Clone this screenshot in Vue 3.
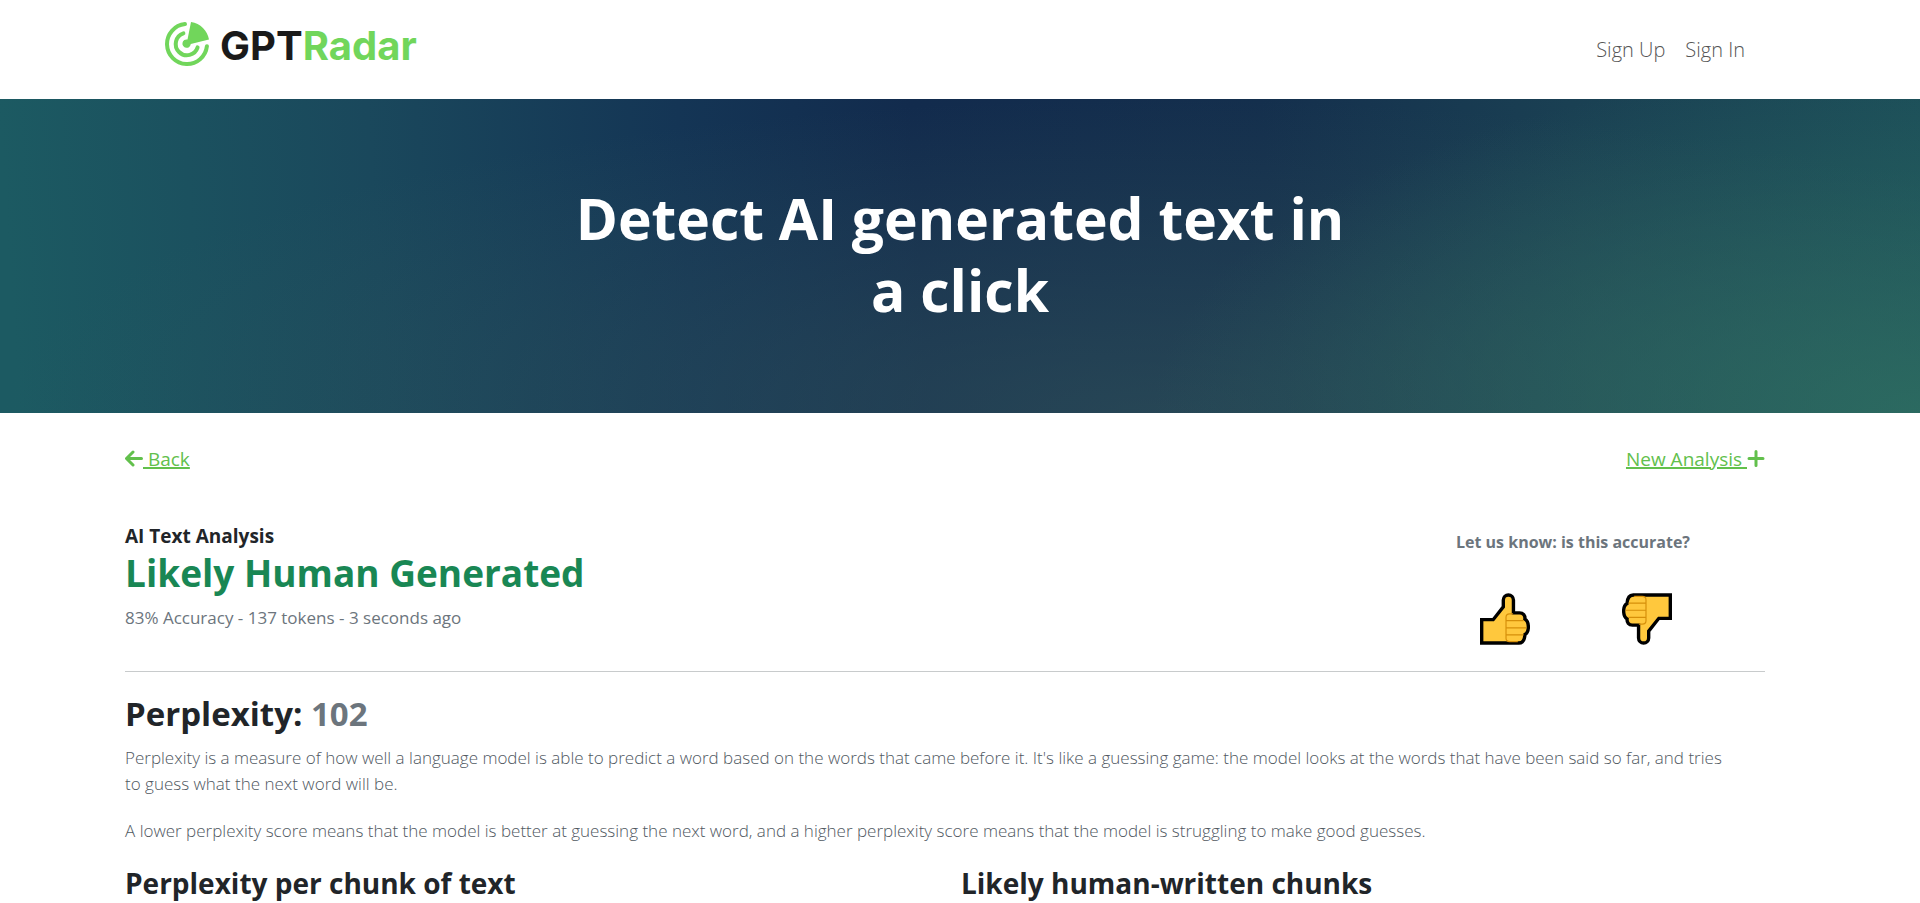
<template>
  <div class="page">
    <header class="navbar">
      <a href="#" class="brand" aria-label="GPTRadar">
        <svg class="brand-icon" viewBox="0 0 44 44" aria-hidden="true">
          <g fill="none" stroke="currentColor" stroke-width="4" stroke-linecap="round">
            <path d="M20 2.1A20 20 0 1 0 41.9 24.2" />
            <path d="M18.4 11.4A11.2 11.2 0 1 0 32.6 25.4" />
          </g>
          <path d="M26 0C35.500 1.500 42.500 8.500 44 17.400L25.800 22A4.200 4.200 0 1 1 22.500 17.500Z" fill="currentColor" />
        </svg>
        <span class="brand-name">GPT<span class="brand-accent">Radar</span></span>
      </a>
      <nav class="nav-links">
        <a v-for="link in links" :key="link" href="#">{{ link }}</a>
      </nav>
    </header>

    <section class="hero">
      <h1>Detect AI generated text in a click</h1>
    </section>

    <main class="content">
      <div class="actions">
        <a href="#" class="action">
          <svg class="action-icon" viewBox="0 0 18 18" aria-hidden="true">
            <path d="M8 2L1.500 8.500L8 15M2 8.500H16.500" />
          </svg><span>&nbsp;Back</span>
        </a>
        <a href="#" class="action">
          <span>New Analysis&nbsp;</span><svg class="action-icon" viewBox="0 0 18 18" aria-hidden="true">
            <path d="M9 1.500V15.500M2 8.500H16" />
          </svg>
        </a>
      </div>

      <section class="summary">
        <div>
          <h2 class="eyebrow">AI Text Analysis</h2>
          <p class="verdict">{{ result.verdict }}</p>
          <p class="meta">{{ result.accuracy }}% Accuracy - {{ result.tokens }} tokens - {{ result.age }}</p>
        </div>
        <div class="feedback">
          <p class="feedback-title">Let us know: is this accurate?</p>
          <div class="votes">
            <button
              v-for="vote in votes"
              :key="vote.name"
              type="button"
              class="vote"
              :class="{ down: vote.down }"
              :aria-label="vote.name"
            >
              <svg viewBox="0 0 148 152" aria-hidden="true">
                <path
                  d="M5 78H39L69 40V20A15 15 0 0 1 99 20V58H117C128 58 134 66 133 76C146 84 147 114 133 122C132 138 126 147 115 147H5Z"
                  fill="#ffc83d"
                  stroke="#000"
                  stroke-width="10"
                />
                <path
                  d="M98 61H88Q77 61 77 71V133Q77 143 88 143H112M77 81H129M77 102H137M77 123H129"
                  fill="none"
                  stroke="#d68f0a"
                  stroke-width="3.500"
                />
              </svg>
            </button>
          </div>
        </div>
      </section>

      <section class="perplexity">
        <h2>Perplexity: <span class="score">{{ result.perplexity }}</span></h2>
        <p>
          Perplexity is a measure of how well a language model is able to predict a word based on the words that came
          before it. It's like a guessing game: the model looks at the words that have been said so far, and tries
          to guess what the next word will be.
        </p>
        <p>
          A lower perplexity score means that the model is better at guessing the next word, and a higher perplexity
          score means that the model is struggling to make good guesses.
        </p>
      </section>

      <div class="columns">
        <h3>Perplexity per chunk of text</h3>
        <h3>Likely human-written chunks</h3>
      </div>
    </main>
  </div>
</template>

<script setup>
const links = ['Sign Up', 'Sign In']

const result = {
  verdict: 'Likely Human Generated',
  accuracy: 83,
  tokens: 137,
  age: '3 seconds ago',
  perplexity: 102
}

const votes = [
  { name: 'Accurate', down: false },
  { name: 'Not accurate', down: true }
]
</script>

<style>
body {
  margin: 0;
  background: #fff;
}
</style>

<style scoped>
.page {
  font-family: 'Open Sans', 'Noto Sans', sans-serif;
  color: #212529;
}

h1,
h2,
h3,
p {
  margin: 0;
}

.navbar {
  display: flex;
  justify-content: space-between;
  align-items: center;
  height: 99px;
  box-sizing: border-box;
  padding: 0 175px 0 165px;
}

.brand {
  display: flex;
  align-items: flex-start;
  gap: 11px;
  padding-bottom: 8px;
  color: #71d65b;
  text-decoration: none;
}

.brand-icon {
  width: 44px;
  height: 44px;
}

.brand-name {
  font-family: Inter, sans-serif;
  font-size: 40px;
  line-height: 48px;
  font-weight: 700;
  color: #1a1a1a;
}

.brand-accent {
  color: #71d65b;
}

.nav-links {
  display: flex;
  gap: 20px;
}

.nav-links a {
  font-size: 20px;
  line-height: 28px;
  font-weight: 300;
  color: #555;
  text-decoration: none;
}

.hero {
  display: flex;
  justify-content: center;
  padding: 83px 24px 87px;
  background:
    radial-gradient(ellipse 40% 110% at 100% 100%, rgba(46, 112, 98, 0.8), rgba(46, 112, 98, 0)),
    radial-gradient(ellipse 60% 100% at 60% 100%, rgba(58, 94, 94, 0.5), rgba(58, 94, 94, 0)),
    linear-gradient(86deg, #1c5a62 1%, #1a485c 20%, #143555 36%, #122b4d 48%, #142f4d 66%, #1a4053 82%, #1c4e59);
}

.hero h1 {
  max-width: 800px;
  font-size: 57px;
  line-height: 72px;
  font-weight: 700;
  text-align: center;
  color: #fff;
}

.content {
  padding: 32px 155px 0 125px;
}

.actions {
  display: flex;
  justify-content: space-between;
}

.action {
  display: flex;
  align-items: center;
  font-size: 19px;
  line-height: 28px;
  color: #62c04c;
  text-decoration: none;
}

.action span {
  text-decoration: underline;
  text-decoration-thickness: 2px;
}

.action-icon {
  width: 18px;
  height: 18px;
  fill: none;
  stroke: currentColor;
  stroke-width: 3;
  stroke-linecap: round;
  stroke-linejoin: round;
}

.summary {
  display: flex;
  justify-content: space-between;
  padding: 48px 0 26px;
  border-bottom: 1px solid #c8cbcc;
}

.eyebrow {
  font-size: 19px;
  line-height: 30px;
  font-weight: 700;
}

.verdict {
  font-size: 37px;
  line-height: 44px;
  font-weight: 700;
  color: #198754;
}

.meta {
  padding-top: 10px;
  font-size: 17px;
  line-height: 26px;
  color: #6c757d;
}

.feedback {
  padding: 8px 75px 0 0;
}

.feedback-title {
  font-size: 16px;
  line-height: 26px;
  font-weight: 700;
  color: #6c757d;
}

.votes {
  display: flex;
  gap: 92px;
  padding: 38px 0 0 24px;
}

.vote {
  padding: 0;
  border: 0;
  background: none;
  cursor: pointer;
}

.vote svg {
  display: block;
  width: 50px;
  height: 52px;
}

.vote.down svg {
  transform: rotate(180deg);
}

.perplexity {
  padding-top: 20px;
}

.perplexity h2 {
  padding-bottom: 9px;
  font-size: 33px;
  line-height: 44px;
  font-weight: 700;
}

.score {
  color: #6c757d;
}

.perplexity p {
  padding: 0 32px 21px 0;
  font-size: 17px;
  line-height: 26px;
  font-weight: 300;
  color: #50585f;
}

.columns {
  display: grid;
  grid-template-columns: 1fr 1fr;
  gap: 32px;
}

.columns h3 {
  font-size: 28px;
  line-height: 36px;
  font-weight: 700;
}
</style>
